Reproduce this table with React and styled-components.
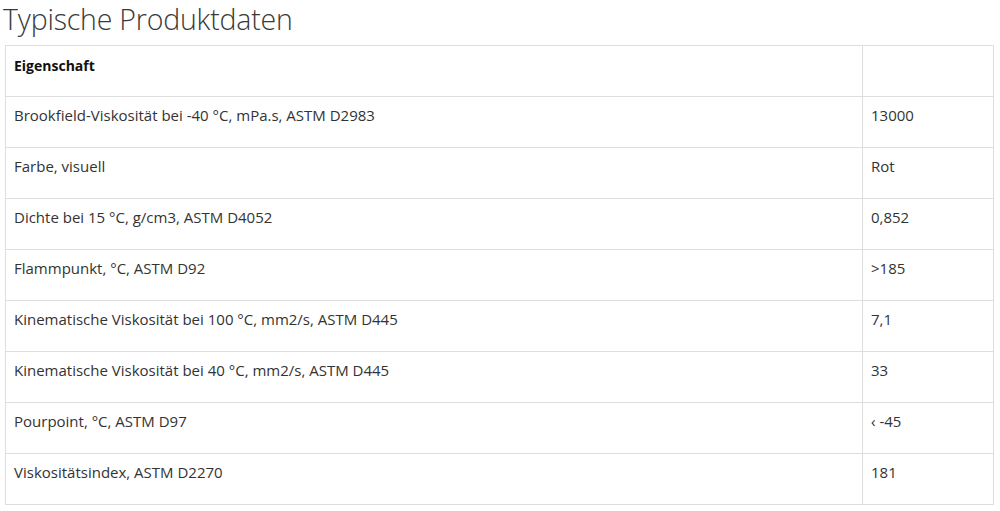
import React from "react";
import styled, { createGlobalStyle } from "styled-components";

const rows = [
    ["Brookfield-Viskosität bei -40 °C, mPa.s, ASTM D2983", "13000"],
    ["Farbe, visuell", "Rot"],
    ["Dichte bei 15 °C, g/cm3, ASTM D4052", "0,852"],
    ["Flammpunkt, °C, ASTM D92", ">185"],
    ["Kinematische Viskosität bei 100 °C, mm2/s, ASTM D445", "7,1"],
    ["Kinematische Viskosität bei 40 °C, mm2/s, ASTM D445", "33"],
    ["Pourpoint, °C, ASTM D97", "‹ -45"],
    ["Viskositätsindex, ASTM D2270", "181"],
];

const GlobalStyle = createGlobalStyle`
    body {
        margin: 0;
        background: #fff;
        font-family: "Open Sans", "Liberation Sans", sans-serif;
        color: #333;
    }
`;

const Page = styled.div`
    padding: 0 6px 0 5px;
`;

const Title = styled.h2`
    margin: 0 0 0 -2px;
    height: 45px;
    font-weight: 300;
    font-size: 28.5px;
    line-height: 38px;
    color: #3a3a3a;
    letter-spacing: -0.2px;
`;

const Table = styled.table`
    width: 100%;
    border-collapse: collapse;
    font-size: 15px;
`;

const Cell = styled.td`
    border: 1px solid #dedede;
    height: 51px;
    box-sizing: border-box;
    padding: ${p => (p.$head ? "10px 8px 8px" : "8px 8px 10px")};
    vertical-align: top;
    line-height: 20px;
    font-weight: ${p => (p.$head ? 700 : 400)};
    font-size: ${p => (p.$head ? "14px" : "15px")};
    color: ${p => (p.$head ? "#111" : "#333")};
    width: ${p => (p.$value ? "131px" : "auto")};
`;

export default function App() {
    return (
        <Page>
            <GlobalStyle />
            <Title>Typische Produktdaten</Title>
            <Table>
                <tbody>
                    <tr>
                        <Cell $head>Eigenschaft</Cell>
                        <Cell $value></Cell>
                    </tr>
                    {rows.map(([name, value]) => (
                        <tr key={name}>
                            <Cell>{name}</Cell>
                            <Cell $value>{value}</Cell>
                        </tr>
                    ))}
                </tbody>
            </Table>
        </Page>
    );
}
